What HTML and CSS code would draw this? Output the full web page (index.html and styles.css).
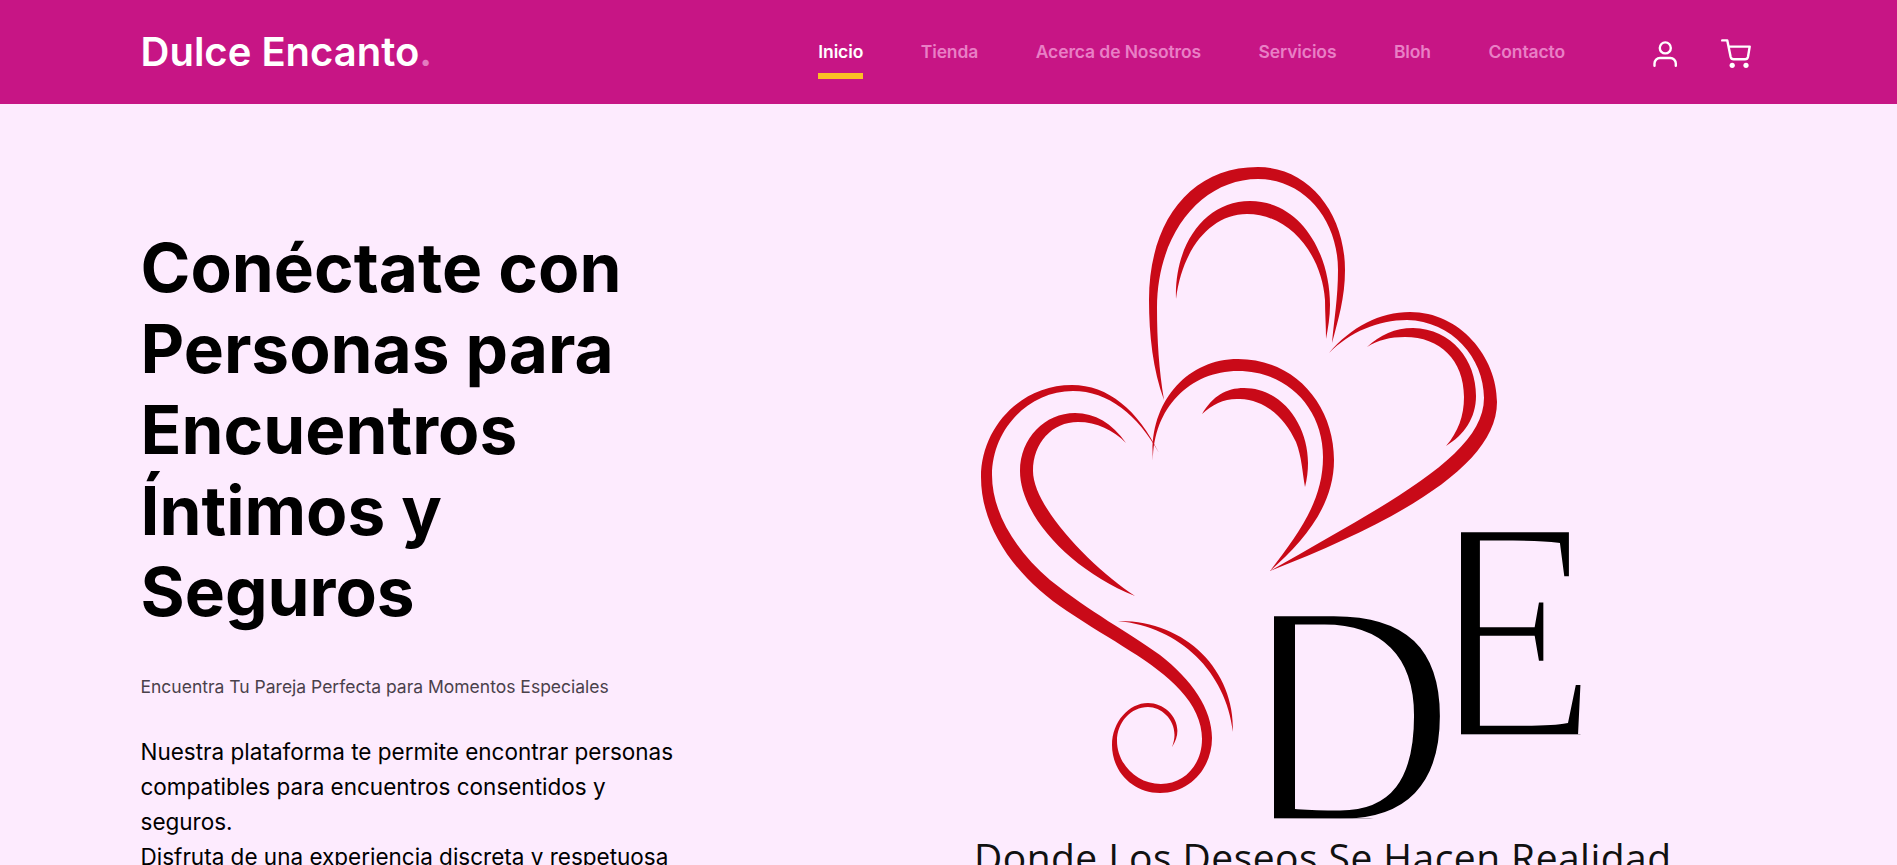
FILE: index.html
```html
<!DOCTYPE html>
<html lang="es">
<head>
<meta charset="utf-8">
<title>Dulce Encanto</title>
<link rel="stylesheet" href="styles.css">
</head>
<body>
<header class="navbar">
  <div class="container navbar-inner">
    <a class="brand">Dulce Encanto<span class="brand-dot">.</span></a>
    <nav class="menu">
      <a class="menu-link active">Inicio</a>
      <a class="menu-link">Tienda</a>
      <a class="menu-link">Acerca de Nosotros</a>
      <a class="menu-link">Servicios</a>
      <a class="menu-link">Bloh</a>
      <a class="menu-link">Contacto</a>
    </nav>
    <div class="actions">
      <svg class="icon-user" viewBox="0 0 24 26" fill="none" stroke="#fff" stroke-width="2.4" stroke-linecap="round">
        <circle cx="12.3" cy="6.9" r="5.5"/>
        <path d="M1.500 24.700V22.500A5.500 5.500 0 0 1 7 17H17.300A5.500 5.500 0 0 1 22.800 22.500V24.700"/>
      </svg>
      <svg class="icon-cart" viewBox="0 0 30 29" fill="none" stroke="#fff" stroke-width="2.4" stroke-linecap="round" stroke-linejoin="round">
        <path d="M1.200 1.400H6.300L9.600 17.700Q10.200 20.300 12.800 20.300H23.900Q26.500 20.300 27 17.700L28.700 7.600H7.600"/>
        <circle cx="11.200" cy="26.300" r="2.600" fill="#fff" stroke="none"/>
        <circle cx="25" cy="26.300" r="2.600" fill="#fff" stroke="none"/>
      </svg>
    </div>
  </div>
</header>
<main class="hero">
  <div class="container hero-inner">
    <section class="intro">
      <h1 class="title">Conéctate con<br>Personas para<br>Encuentros<br>Íntimos y<br>Seguros</h1>
      <p class="subtitle">Encuentra Tu Pareja Perfecta para Momentos Especiales</p>
      <p class="lead">Nuestra plataforma te permite encontrar personas<br>compatibles para encuentros consentidos y<br>seguros.<br>Disfruta de una experiencia discreta y respetuosa</p>
    </section>
    <svg class="emblem" viewBox="960 104 720 780">
      <defs>
        <clipPath id="stem-d"><rect x="1274" y="616" width="200" height="202.500"/></clipPath>
        <clipPath id="stem-e"><rect x="1461" y="532" width="160" height="202.500"/></clipPath>
      </defs>
      <g clip-path="url(#stem-d)"><text class="monogram" transform="translate(1234.500 821) scale(.962 1)">D</text></g>
      <g clip-path="url(#stem-e)"><text class="monogram" transform="translate(1423.500 737) scale(.897 1)">E</text></g>
      <g class="hearts">
        <path d="M1164 400C1153 370 1149 335 1149 300C1149 222 1190 167 1258 167C1308 167 1345 212 1345 270C1345 298 1338 320 1332 343C1334 320 1338 298 1338 270C1338 218 1303 179 1258 179C1203 179 1157 232 1157 308C1157 340 1159 370 1164 400Z"/>
        <path d="M1176 299C1174 245 1205 201 1250 201C1300 201 1330 252 1330 305C1330 317 1328 328 1326 339C1326 326 1325 313 1325 300C1322 255 1290 214 1247 214C1210 214 1182 250 1176 299Z"/>
        <path d="M1329 353C1351 327 1380 312 1410 312C1460 312 1497 357 1497 402C1497 465 1400 520 1270 571C1390 502 1484 455 1484 398C1484 358 1452 321 1407 320C1378 320 1350 332 1329 353Z"/>
        <path d="M1367 347C1380 335 1395 328 1413 328C1452 329 1476 360 1476 396C1476 418 1464 435 1446 446C1458 432 1464 416 1464 397C1464 360 1440 337 1405 337C1390 337 1378 340 1367 347Z"/>
        <path d="M1153 461C1148 405 1185 359 1238 359C1295 359 1334 405 1334 460C1334 505 1305 540 1270 571C1300 532 1323 500 1323 457C1323 408 1287 371 1238 371C1190 371 1153 408 1153 461Z"/>
        <path d="M1202 414C1213 396 1226 388 1244 388C1282 388 1308 425 1308 463C1308 471 1307 479 1305 487C1302 470 1302 458 1296 442C1285 418 1266 400 1240 399C1225 398 1213 404 1202 414Z"/>
        <path d="M1159 453C1138 410 1108 385 1072 385C1020 385 981 428 981 477C981 530 1018 579 1067 611C1110 640 1155 662 1180 690C1194 705 1202 722 1202 739C1202 765 1184 784 1161 784C1136 784 1117 763 1117 741C1117 722 1131 707 1148 707C1164 707 1181 725 1172 747C1187 725 1168 703 1148 703C1129 703 1112 722 1112 745C1112 772 1133 793 1160 793C1190 793 1212 768 1212 738C1212 709 1192 680 1160 655C1128 632 1090 612 1050 580C1015 550 992 512 992 475C992 430 1028 391 1073 391C1108 391 1138 415 1159 453Z"/>
        <path d="M1126 443C1112 423 1095 413 1075 413C1045 413 1020 438 1020 471C1020 515 1070 570 1135 596C1095 570 1033 508 1033 471C1033 443 1052 422 1078 422C1097 422 1113 430 1126 443Z"/>
        <path d="M1118 621C1185 620 1235 670 1233 732C1226 672 1180 627 1118 621Z"/>
      </g>
      <text class="motto" x="974" y="872" textLength="697">Donde Los Deseos Se Hacen Realidad</text>
    </svg>
  </div>
</main>
</body>
</html>
```
FILE: styles.css
```css
* { box-sizing: border-box; }
body {
  margin: 0;
  height: 865px;
  overflow: hidden;
  background: #fdebfe;
  color: #000;
  font-family: Inter, "Liberation Sans", sans-serif;
}
.container { width: 1650px; margin: 0 auto; padding: 0 15px; }
.navbar { height: 104px; background: #c71585; }
.navbar-inner { display: flex; align-items: center; height: 104px; }
.brand { font-size: 40px; font-weight: 600; color: #fff; white-space: nowrap; padding: 0 0 2px 2px; }
.brand-dot { color: #e37cc0; }
.menu { display: flex; gap: 57.5px; margin-left: auto; }
.menu-link {
  display: block;
  padding: 10px 0 9px;
  border-bottom: 6px solid transparent;
  margin-top: 3px;
  font-size: 17.5px;
  line-height: 25px;
  font-weight: 600;
  letter-spacing: -.11px;
  color: #e97fc5;
  white-space: nowrap;
}
.menu-link.active { color: #fff; border-bottom-color: #fbbf24; }
.actions { display: flex; align-items: center; margin-left: 87.5px; gap: 44px; padding-right: 8px; }
.icon-user { width: 24px; height: 26px; margin-top: 3px; }
.icon-cart { width: 30px; height: 29px; margin-top: 3px; }
.hero-inner { display: flex; justify-content: space-between; }
.intro { width: 600px; padding: 123px 0 0 2px; }
.title { margin: 0; font-size: 67.5px; line-height: 81px; font-weight: 700; white-space: nowrap; }
.subtitle { margin: 37px 0 0; font-size: 17.5px; line-height: 35px; color: #4a414b; }
.lead { margin: 30px 0 0; font-size: 22.5px; line-height: 35px; white-space: nowrap; }
.emblem { width: 720px; height: 780px; margin-right: 78.5px; flex: none; }
.hearts { fill: #c90a18; }
.monogram { font-family: "Liberation Serif", serif; font-size: 317px; fill: #000; stroke: #fdebfe; stroke-width: 5.5px; }
.motto { font-family: "Open Sans", sans-serif; font-size: 39px; fill: #111; }
```
